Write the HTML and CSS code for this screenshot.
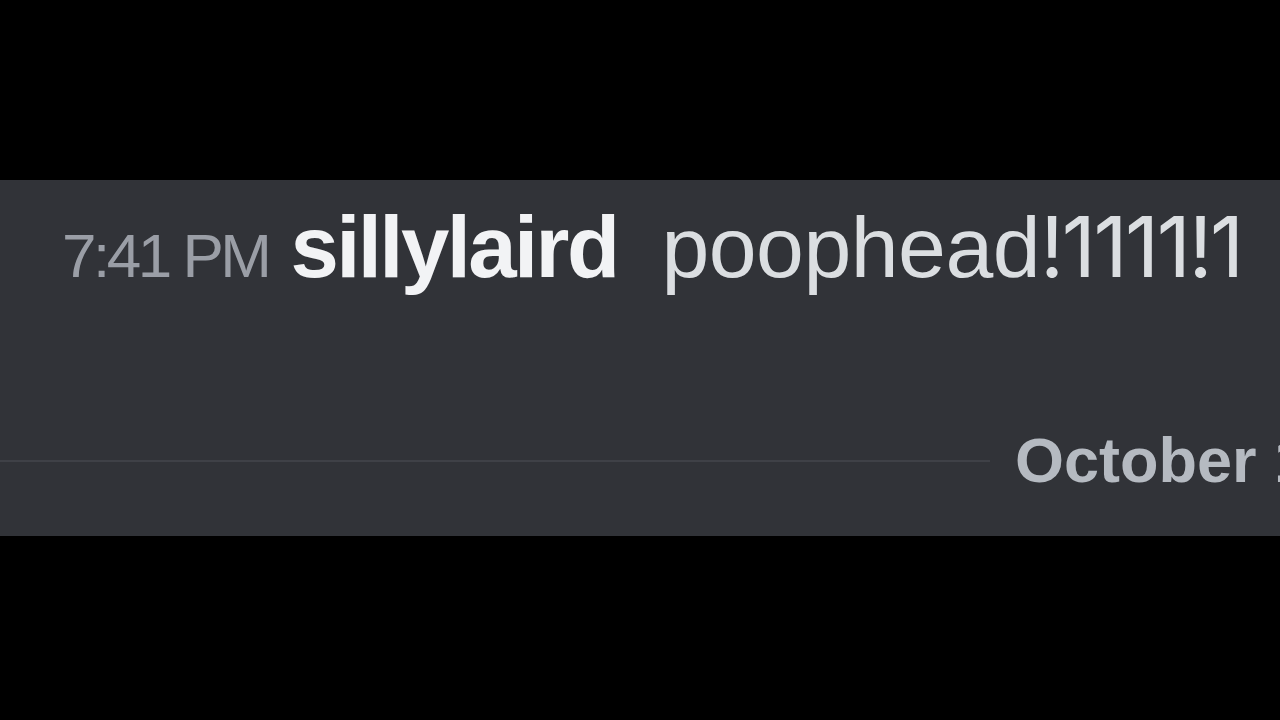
FILE: index.html
```html
<!DOCTYPE html>
<html lang="en">

<head>
  <meta charset="utf-8">
  <meta name="viewport" content="width=device-width, initial-scale=1">
  <title>sillylaird</title>
  <link rel="stylesheet" href="styles.css">
</head>

<body>
  <!-- chat -->
  <section class="chat">
    <div class="message">
      <span class="timestamp">7:41 PM</span>
      <span class="username">sillylaird</span>
      <span class="content">poophead<span class="shout">!1111!1</span></span>
    </div>
    <!-- date divider -->
    <div class="divider">
      <span class="divider-line"></span>
      <span class="divider-label">October 18, 2023</span>
    </div>
  </section>
</body>

</html>
```

FILE: styles.css
```css
* {
  padding: 0;
  margin: 0;
  box-sizing: border-box;
}

body {
  background-color: #000;
  height: 720px;
  overflow: hidden;
  font-family: "Liberation Sans", Arial, sans-serif;
}

.chat {
  margin-top: 180px;
  height: 356px;
  background-color: #313338;
  overflow: hidden;
}

.message {
  display: flex;
  align-items: baseline;
  padding: 23px 0 0 62px;
  line-height: 1;
  white-space: nowrap;
}

.timestamp {
  font-size: 62px;
  letter-spacing: -3.5px;
  color: #9a9ea6;
  margin-right: 22px;
}

.username {
  font-size: 87px;
  font-weight: 700;
  letter-spacing: -2.6px;
  color: #f2f3f5;
  margin-right: 44px;
}

.content {
  font-size: 86px;
  letter-spacing: -0.5px;
  color: #dbdee1;
}

.content .shout {
  font-family: Inter, "Liberation Sans", sans-serif;
  font-size: 84px;
  font-weight: 400;
  letter-spacing: -2.5px;
}

/* date divider */
.divider {
  display: flex;
  align-items: center;
  margin-top: 139px;
  line-height: 1;
}

.divider-line {
  flex: 0 0 990px;
  height: 2px;
  background-color: #3f4147;
}

.divider-label {
  flex-shrink: 0;
  margin-left: 25px;
  font-size: 63px;
  font-weight: 700;
  color: #b5bac1;
  white-space: nowrap;
}
```
